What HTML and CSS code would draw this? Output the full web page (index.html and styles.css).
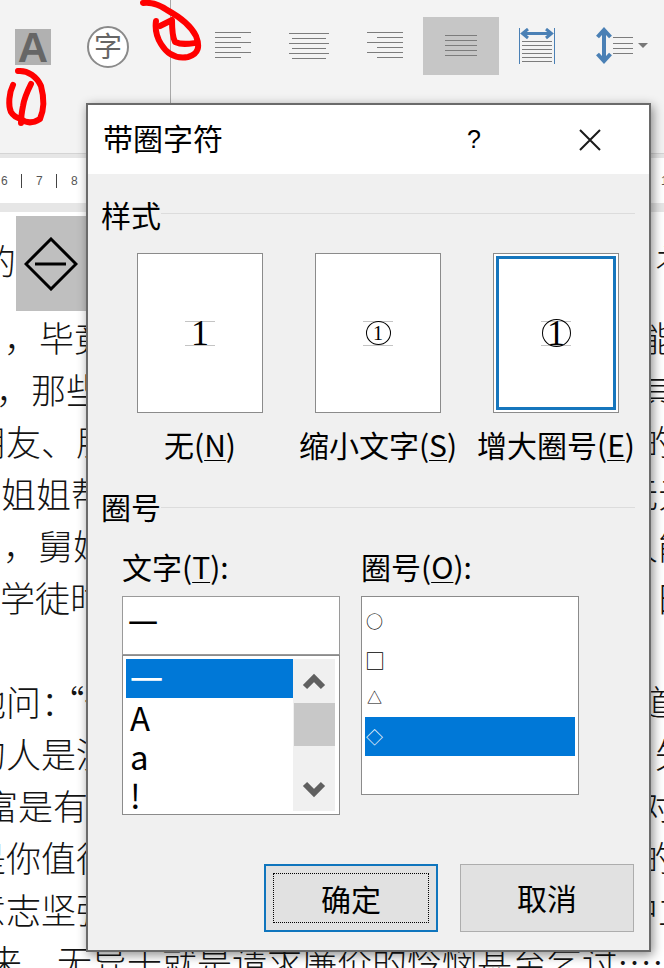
FILE: index.html
```html
<!DOCTYPE html>
<html lang="zh">
<head>
<meta charset="utf-8">
<title>带圈字符</title>
<link rel="stylesheet" href="styles.css">
</head>
<body>
<div class="app">
  <header class="ribbon">
    <div class="tool-a">A</div>
    <div class="tool-enclose">字</div>
    <div class="ribbon-sep"></div>
    <svg class="tool align-left" width="36" height="27" viewBox="0 0 36 27"><path d="M0 .5H36M0 5.5H26M0 10.5H36M0 15.5H26M0 20.5H36M0 25.5H26"/></svg>
    <svg class="tool align-center" width="40" height="27" viewBox="0 0 40 27"><path d="M0 .5H40M3 5.5H37M0 10.5H40M3 15.5H37M0 20.5H40M3 25.5H37"/></svg>
    <svg class="tool align-right" width="36" height="27" viewBox="0 0 36 27"><path d="M0 .5H36M10 5.5H36M0 10.5H36M10 15.5H36M0 20.5H36M10 25.5H36"/></svg>
    <div class="tool-justify"><svg class="tool" width="32" height="22" viewBox="0 0 32 22"><path d="M0 .5H32M0 5.5H32M0 10.5H32M0 15.5H32M0 20.5H32"/></svg></div>
    <svg class="tool distribute" width="37" height="37" viewBox="0 0 37 37"><path class="blue-thin" d="M.5 0V36M35.5 0V36"/><path d="M3 13.500H33M3 17.500H33M3 21.500H33M3 25.500H33M3 29.500H33M3 33.500H33"/><path class="blue" d="M4 5.500H32M9 1L3.500 5.500L9 10M27 1L32.500 5.500L27 10"/></svg>
    <svg class="tool spacing" width="38" height="37" viewBox="0 0 38 37"><path class="blue" d="M8 4V33M1.500 10L8 3L14.500 10M1.500 27L8 34L14.500 27"/><path d="M17 10.500H37M17 16.500H37M17 21.500H37M17 26.500H37"/></svg>
    <span class="caret"></span>
  </header>
  <div class="band"></div>
  <div class="ruler">
    <span class="num">6</span><i class="tick"></i><span class="num">7</span><i class="tick"></i><span class="num">8</span>
    <span class="ruler-end"><i class="tick"></i><span class="num">1</span></span>
  </div>
  <div class="band band-low"></div>

  <main class="doc">
    <div class="line line-tall">
      <span class="left i1">的</span>
      <span class="hit"><svg width="54" height="54" viewBox="0 0 54 54"><path class="diamond" d="M27 2L52 27L27 52L2 27Z"/><path class="diamond" d="M11 27H42"/></svg></span>
      <span class="right in">衤</span>
    </div>
    <div class="line"><span class="left i2">，毕竟</span><span class="right">能</span></div>
    <div class="line"><span class="left i3">，那些</span><span class="right">其</span></div>
    <div class="line"><span class="left i4">朋友、朋</span><span class="right">的</span></div>
    <div class="line"><span class="left i5">姐姐帮</span><span class="right two">无元</span></div>
    <div class="line"><span class="left i6">，舅妈</span><span class="right two">人能</span></div>
    <div class="line"><span class="left i7">学徒时</span><span class="right in">日</span></div>
    <div class="line"></div>
    <div class="line"><span class="left i12">他问<span class="tight">：</span>“他</span><span class="right">道</span></div>
    <div class="line"><span class="left i12">的人是没</span><span class="right in">失</span></div>
    <div class="line"><span class="left i11">富是有</span><span class="right">对</span></div>
    <div class="line"><span class="left i12">是你值得</span><span class="right">的</span></div>
    <div class="line"><span class="left i12">意志坚强</span><span class="right two">中立</span></div>
    <div class="line"><span class="left i14">来，无异于就是请求廉价的怜悯甚至乞讨……</span></div>
  </main>

  <svg class="scribble" width="664" height="130" viewBox="0 0 664 130">
    <path d="M143 3C152 2 160 5 167 10C178 16 190 24 196 36C200 46 199 54 188 57C176 59 167 54 161 44C156 36 155 28 156 21"/>
    <path d="M160 26L172 20C172 28 172 36 175 42C182 45 188 44 195 43"/>
    <path d="M13 85C9 93 8 105 11 112C14 117 17 118 21 119C26 123 32 124 40 119C44 110 44 97 41 86C37 77 28 70 18 71"/>
    <path d="M31 84C27 92 24 99 23 106C22 111 21 117 21 123"/>
  </svg>

  <section class="dialog">
    <div class="titlebar">
      <h1 class="title">带圈字符</h1>
      <span class="help">?</span>
      <svg class="close" width="22" height="22" viewBox="0 0 22 22"><path d="M1 1L21 21M21 1L1 21"/></svg>
    </div>
    <div class="dialog-body">
      <div class="legend legend-style"><span>样式</span><i></i></div>
      <div class="styles">
        <div class="style-cell">
          <div class="card"><div class="sample"><span class="digit">1</span></div></div>
          <div class="caption">无(<u>N</u>)</div>
        </div>
        <div class="style-cell">
          <div class="card"><div class="sample"><span class="ring ring-small"><span class="digit digit-small">1</span></span></div></div>
          <div class="caption">缩小文字(<u>S</u>)</div>
        </div>
        <div class="style-cell">
          <div class="card card-on"><div class="sample"><span class="ring ring-big"><span class="digit">1</span></span></div></div>
          <div class="caption">增大圈号(<u>E</u>)</div>
        </div>
      </div>
      <div class="legend legend-ring"><span>圈号</span><i></i></div>
      <div class="pickers">
        <div class="picker">
          <div class="caption field-label">文字(<u>T</u>):</div>
          <div class="textbox">一</div>
          <div class="listbox">
            <div class="rows">
              <div class="row row-on">一</div>
              <div class="row">A</div>
              <div class="row">a</div>
              <div class="row">!</div>
            </div>
            <div class="scrollbar">
              <svg width="24" height="44" viewBox="0 0 24 44"><path d="M3 28L12 19L21 28"/></svg>
              <div class="thumb"></div>
              <svg class="scroll-down" width="24" height="44" viewBox="0 0 24 44"><path d="M3 17L12 26L21 17"/></svg>
            </div>
          </div>
        </div>
        <div class="picker">
          <div class="caption field-label">圈号(<u>O</u>):</div>
          <div class="marks">
            <div class="mark-row mark-circle">○</div>
            <div class="mark-row mark-square">□</div>
            <div class="mark-row mark-triangle">△</div>
            <div class="mark-row row-on">◇</div>
          </div>
        </div>
      </div>
      <div class="actions">
        <button class="btn btn-primary"><span>确定</span></button>
        <button class="btn">取消</button>
      </div>
    </div>
  </section>
</div>
</body>
</html>
```

FILE: styles.css
```css
* { box-sizing: border-box; }
html, body { margin: 0; padding: 0; }
body { background: #fff; font-family: "Noto Sans CJK SC", "Noto Sans", sans-serif; color: #000; }
.app { position: relative; width: 664px; height: 968px; overflow: hidden; }

.ribbon { display: flex; align-items: flex-start; height: 154px; background: #f3f3f3; border-bottom: 1px solid #d4d4d4; padding-left: 15px; }
.tool-a { width: 36px; height: 36px; margin-top: 29px; background: #b1b1b1; color: #666; font: bold 42px/38px "Liberation Sans", sans-serif; text-align: center; }
.tool-enclose { width: 42px; height: 42px; margin: 26px 0 0 36px; border: 2px solid #8a8a8a; border-radius: 50%; background: #fff; color: #666; font-size: 28px; line-height: 35px; text-align: center; }
.ribbon-sep { width: 1px; height: 103px; margin-left: 41px; background: #a8a8a8; }
.tool { display: block; fill: none; stroke: #7c7c7c; stroke-width: 1; }
.align-left { margin: 32px 0 0 44px; }
.align-center { margin: 33px 0 0 38px; }
.align-right { margin: 32px 0 0 38px; }
.tool-justify { display: flex; align-items: center; justify-content: center; width: 76px; height: 58px; margin: 17px 0 0 20px; background: #c6c6c6; }
.distribute { margin: 28px 0 0 20px; }
.spacing { margin: 27px 0 0 40px; }
.blue { stroke: #4a80b5; stroke-width: 3; fill: none; }
.spacing .blue { stroke-width: 4; }
.blue-thin { stroke: #4a80b5; }
.caret { width: 0; height: 0; margin: 43px 0 0 4px; border: 5px solid transparent; border-top: 5px solid #777; }

.band { height: 4px; background: #e6e6e6; }
.band-low { height: 9px; }
.ruler { display: flex; align-items: center; height: 45px; background: #fff; font: 12px "Liberation Sans", sans-serif; color: #555; }
.num { width: 7px; margin-left: 1px; }
.tick { display: block; width: 1px; height: 14px; margin: 0 13px; background: #444; }
.ruler-end { display: flex; align-items: center; margin-left: auto; }
.ruler-end .tick { margin: 0 10px 0 0; }
.ruler-end .num { margin: 0 -4px 0 0; }

.doc { font-size: 35px; font-weight: 300; line-height: 46px; color: #141414; }
.line { display: flex; justify-content: space-between; height: 52px; overflow: hidden; white-space: nowrap; }
.line-tall { position: relative; height: 102px; padding-top: 25px; }
.left { display: block; flex: none; }
.right { display: block; flex: none; width: 41px; text-indent: 17px; overflow: hidden; }
.right.in { text-indent: 32px; }
.right.two { text-indent: 0; }
.tight { letter-spacing: -9px; }
.i1 { margin-left: -19px; }
.i2 { margin-left: 4px; }
.i3 { margin-left: -4px; }
.i4 { margin-left: -29px; }
.i5 { margin-left: 1px; }
.i6 { margin-left: 3px; }
.i7 { margin-left: 0; }
.i11 { margin-left: -17px; }
.i12 { margin-left: -29px; }
.i14 { margin-left: -13px; }
.hit { position: absolute; left: 16px; top: 4px; display: flex; align-items: center; justify-content: center; width: 76px; height: 95px; padding-right: 7px; background: #bfbfbf; }
.hit svg { display: block; }
.diamond { fill: none; stroke: #000; stroke-width: 3; }

.scribble { position: absolute; left: 0; top: 0; }
.scribble path { fill: none; stroke: #f00; stroke-width: 6; stroke-linecap: round; stroke-linejoin: round; }

.dialog { position: absolute; left: 86px; top: 103px; width: 565px; height: 849px; border: 2px solid #6a6a6a; background: #f0f0f0; box-shadow: 2px 3px 10px rgba(0, 0, 0, .45); }
.titlebar { display: flex; align-items: center; height: 69px; padding-left: 15px; background: #fff; }
.title { flex: 1; margin: 0 0 4px; font-size: 30px; font-weight: 400; line-height: 65px; }
.help { width: 20px; margin-right: 95px; font: 25px "Liberation Sans", sans-serif; text-align: center; }
.close { display: block; margin-right: 48px; fill: none; stroke: #1a1a1a; stroke-width: 2; }

.dialog-body { padding: 22px 14px 0 13px; }
.legend { display: flex; align-items: flex-start; height: 40px; font-size: 30px; line-height: 36px; }
.legend i { flex: 1; height: 1px; background: #dcdcdc; }
.legend-style i { margin-top: 17px; }
.legend-ring i { margin-top: 19px; }
.legend-ring { margin-top: 22px; }
.styles { display: flex; gap: 52px; margin-top: 17px; padding-left: 36px; }
.style-cell { display: flex; flex-direction: column; align-items: center; width: 126px; }
.card { display: flex; align-items: center; justify-content: center; width: 126px; height: 160px; border: 1px solid #8b8b8b; background: #fff; }
.card-on { box-shadow: inset 0 0 0 2px #fff, inset 0 0 0 5px #1676bd; }
.sample { display: flex; align-items: center; justify-content: center; width: 30px; height: 25px; border-top: 1px solid #c4c4c4; border-bottom: 1px solid #c4c4c4; }
.digit { font: 36px/24px "Liberation Serif", serif; }
.digit-small { font-size: 20px; }
.ring { display: flex; flex: none; align-items: center; justify-content: center; border: 1px solid #000; border-radius: 50%; }
.ring-small { width: 25px; height: 24px; }
.ring-big { width: 29px; height: 28px; }
.caption { height: 40px; margin-top: 13px; font-size: 30px; line-height: 36px; white-space: nowrap; }
.caption u { text-decoration-thickness: 1px; text-underline-offset: 3px; }

.pickers { display: flex; gap: 21px; padding-left: 21px; }
.picker { width: 218px; }
.field-label { margin-top: 20px; margin-bottom: 8px; }
.textbox { height: 59px; padding-left: 5px; border: 1px solid #9a9a9a; background: #fff; font-size: 30px; line-height: 48px; }
.listbox { display: flex; height: 160px; padding: 3px 4px 3px 3px; border: 1px solid #8b8b8b; background: #fff; }
.rows { flex: 1; font-size: 33px; line-height: 39px; }
.row { height: 39px; padding-left: 4px; }
.row-on { background: #0078d7; color: #fff; }
.scrollbar { display: flex; flex-direction: column; align-items: center; width: 42px; background: #f0f0f0; }
.scrollbar svg { display: block; flex: none; fill: none; stroke: #606060; stroke-width: 6; }
.scroll-down { margin-top: auto; }
.thumb { flex: none; width: 41px; height: 43px; background: #c8c8c8; }
.marks { height: 199px; padding: 3px; border: 1px solid #8b8b8b; background: #fff; font-size: 17px; line-height: 39px; }
.mark-row { height: 39px; padding-left: 1px; }
.mark-circle { line-height: 42px; color: #000; }
.mark-square { font-size: 20px; line-height: 44px; padding-left: 0; }
.mark-triangle { font-size: 15px; line-height: 37px; padding-left: 2px; }

.actions { display: flex; justify-content: flex-end; gap: 22px; margin-top: 49px; padding-right: 1px; }
.btn { display: flex; align-items: center; justify-content: center; width: 174px; height: 68px; padding: 0 0 2px; border: 1px solid #adadad; border-radius: 0; background: #e1e1e1; color: #000; font: 30px "Noto Sans CJK SC", sans-serif; }
.btn-primary { border: 2px solid #0f75bd; padding: 7px; }
.btn-primary span { display: flex; align-items: center; justify-content: center; width: 100%; height: 100%; border: 1px dotted #000; }
```
